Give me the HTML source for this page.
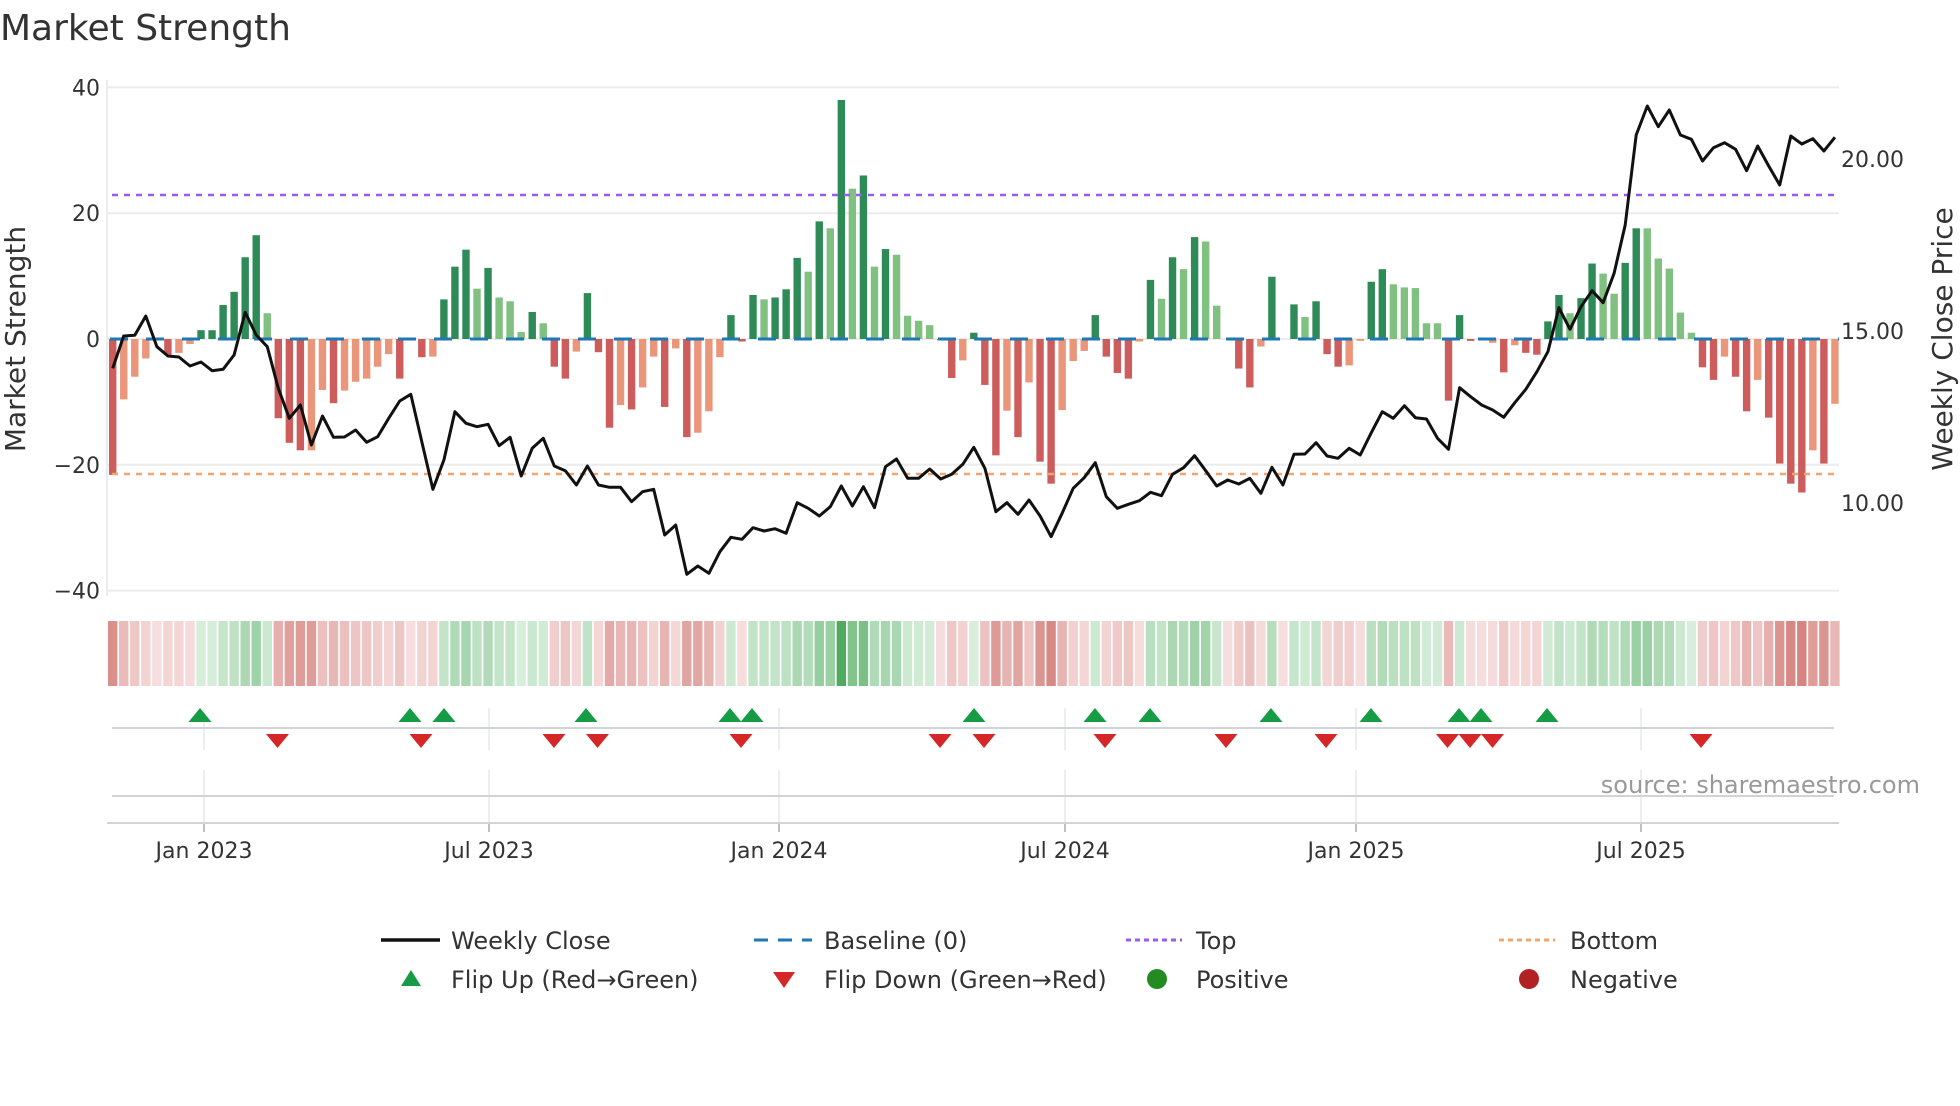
<!DOCTYPE html>
<html><head><meta charset="utf-8">
<style>
html,body{margin:0;padding:0;background:#fff;}
body{width:1960px;height:1102px;overflow:hidden;position:relative;font-family:"DejaVu Sans","Liberation Sans",sans-serif;}
svg text{font-family:"DejaVu Sans","Liberation Sans",sans-serif;}
</style></head>
<body>
<svg id="s" width="1960" height="1102" viewBox="0 0 1960 1102" xmlns="http://www.w3.org/2000/svg">
<text x="0" y="40" font-size="36" fill="#333">Market Strength</text>
<g id="grid"></g>
<g id="bars"></g>
<g id="strip"></g>
<g id="flip"></g>
<g id="labels" fill="#333" font-size="22"></g>
<text x="1920" y="793" font-size="24" fill="#999" text-anchor="end">source: sharemaestro.com</text>
<text transform="translate(25,339) rotate(-90)" font-size="28" fill="#333" text-anchor="middle">Market Strength</text>
<text transform="translate(1952,339) rotate(-90)" font-size="28" fill="#333" text-anchor="middle">Weekly Close Price</text>
<!-- legend -->
<g font-size="24" fill="#333">
<line x1="381" y1="940" x2="440" y2="940" stroke="#111" stroke-width="3.5"/>
<text x="451" y="949">Weekly Close</text>
<line x1="754" y1="940" x2="812" y2="940" stroke="#1f77b4" stroke-width="3" stroke-dasharray="14,10"/>
<text x="824" y="949">Baseline (0)</text>
<line x1="1126" y1="940" x2="1182" y2="940" stroke="#9b5de5" stroke-width="3" stroke-dasharray="5,4"/>
<text x="1196" y="949">Top</text>
<line x1="1499" y1="940" x2="1555" y2="940" stroke="#f0a470" stroke-width="3" stroke-dasharray="5,4"/>
<text x="1570" y="949">Bottom</text>
<polygon points="401,986 421,986 411,970" fill="#169c45"/>
<text x="451" y="988">Flip Up (Red→Green)</text>
<polygon points="773,972 795,972 784,988" fill="#d62728"/>
<text x="824" y="988">Flip Down (Green→Red)</text>
<circle cx="1157" cy="979" r="10" fill="#228b22"/>
<text x="1196" y="988">Positive</text>
<circle cx="1529" cy="979" r="10" fill="#b22222"/>
<text x="1570" y="988">Negative</text>
</g>
</svg>
<script>
var NS="http://www.w3.org/2000/svg";
function el(p,t,a){var e=document.createElementNS(NS,t);for(var k in a)e.setAttribute(k,a[k]);p.appendChild(e);return e;}
var V=[[-21.6,1],[-9.6,0],[-6,0],[-3.1,0],[0,1],[-2.5,1],[-2.2,0],[-0.8,0],[1.4,1],[1.4,1],
[5.4,1],[7.5,1],[13,1],[16.5,1],[4.1,0],[-12.6,1],[-16.5,1],[-17.7,1],[-17.7,0],[-8.1,0],
[-10.2,1],[-8.2,0],[-6.8,0],[-6.3,0],[-4.4,0],[-2.4,0],[-6.3,1],[0,1],[-2.9,1],[-2.8,0],
[6.3,1],[11.5,1],[14.2,1],[8,0],[11.3,1],[6.6,0],[6,0],[1.1,0],[4.3,1],[2.5,0],
[-4.4,1],[-6.3,1],[-2,0],[7.3,1],[-2.1,1],[-14.1,1],[-10.5,0],[-11.2,1],[-7.7,0],[-2.8,0],
[-10.8,1],[-1.5,0],[-15.6,1],[-14.9,0],[-11.5,0],[-2.9,0],[3.8,1],[-0.4,1],[7,1],[6.3,0],
[6.6,1],[7.9,1],[12.9,1],[10.7,0],[18.7,1],[17.6,0],[38,1],[23.9,0],[26,1],[11.5,0],
[14.3,1],[13.4,0],[3.7,0],[2.9,0],[2.2,0],[-0.2,1],[-6.2,1],[-3.4,0],[1,1],[-7.3,1],
[-18.5,1],[-11.4,0],[-15.6,1],[-6.9,0],[-19.5,1],[-23,1],[-11.3,0],[-3.5,0],[-1.9,0],[3.8,1],
[-2.8,1],[-5.4,1],[-6.3,1],[-0.4,0],[9.4,1],[6.4,0],[13,1],[11.1,0],[16.2,1],[15.5,0],
[5.3,0],[0,1],[-4.7,1],[-7.7,1],[-1.2,0],[9.9,1],[0,1],[5.5,1],[3.5,0],[6,1],
[-2.4,1],[-4.4,1],[-4.2,0],[-0.3,0],[9.1,1],[11.1,1],[8.7,0],[8.2,0],[8.1,0],[2.5,0],
[2.5,0],[-9.8,1],[3.8,1],[-0.3,1],[0,1],[-0.6,0],[-5.3,1],[-1,0],[-2.2,1],[-2.5,1],
[2.8,1],[7,1],[4.1,0],[6.5,1],[12,1],[10.4,0],[7.2,0],[12.1,1],[17.6,1],[17.6,0],
[12.8,0],[11.2,0],[4.2,0],[1,0],[-4.5,1],[-6.5,1],[-2.8,0],[-6,1],[-11.5,1],[-6.5,0],
[-12.5,1],[-19.8,1],[-23,1],[-24.4,1],[-17.7,0],[-19.8,1],[-10.3,0]];
var L=[865,768,766,708,800,828,831,858,846,872,868,825,697,765,800,925,1015,975,1095,1008,
1072,1071,1050,1087,1070,1015,963,943,1085,1228,1140,995,1030,1040,1033,1097,1072,1188,1105,1075,
1158,1172,1215,1158,1215,1222,1222,1265,1235,1228,1365,1335,1483,1458,1480,1415,1372,1378,1343,1353,
1346,1360,1268,1285,1308,1280,1218,1278,1220,1283,1160,1137,1195,1195,1167,1197,1183,1153,1102,1165,
1295,1268,1303,1260,1308,1370,1300,1225,1193,1148,1250,1285,1273,1262,1237,1247,1183,1163,1127,1172,
1218,1200,1212,1195,1240,1162,1215,1123,1122,1088,1128,1135,1105,1125,1058,995,1015,977,1013,1017,
1075,1108,923,950,975,990,1012,968,928,875,815,683,748,680,632,668,580,435,165,78,
140,90,165,178,243,203,188,208,272,198,258,315,168,192,176,213,172];
var X0=112.7,DX=11.04,Y0=339,SC=6.29;
function cx(i){return X0+DX*i;}
var g=document.getElementById('grid');
[40,20,0,-20,-40].forEach(function(v){var y=Y0-v*SC;
 el(g,'line',{x1:107,x2:1839,y1:y,y2:y,stroke:'#ececec','stroke-width':2});});
el(g,'line',{x1:107,x2:107,y1:80,y2:596,stroke:'#ececec','stroke-width':2});
var lab=document.getElementById('labels');
[[40,'40'],[20,'20'],[0,'0'],[-20,'\u221220'],[-40,'\u221240']].forEach(function(a){
 var t=el(lab,'text',{x:100,y:Y0-a[0]*SC+8,'text-anchor':'end'});t.textContent=a[1];});
[['20.00',159],['15.00',331],['10.00',503]].forEach(function(a){
 var t=el(lab,'text',{x:1841,y:a[1]+8});t.textContent=a[0];});
var b=document.getElementById('bars');
V.forEach(function(d,i){var v=d[0];if(v===0)return;var h=Math.abs(v)*SC;
 var c=v>0?(d[1]?'#2e8b57':'#80c080'):(d[1]?'#cd5c5c':'#e9967a');
 el(b,'rect',{x:cx(i)-3.7,y:v>0?Y0-h:Y0,width:7.4,height:h,fill:c});});
el(b,'line',{x1:110,x2:1839,y1:Y0,y2:Y0,stroke:'#1f77b4','stroke-width':3,'stroke-dasharray':'18,18'});
el(b,'line',{x1:112,x2:1839,y1:195,y2:195,stroke:'#9b5de5','stroke-width':2.5,'stroke-dasharray':'6,6'});
el(b,'line',{x1:112,x2:1839,y1:474,y2:474,stroke:'#f0a470','stroke-width':2.5,'stroke-dasharray':'6,6'});
var pts=L.map(function(y,i){return cx(i).toFixed(1)+','+(80+y/3).toFixed(1);}).join(' ');
el(b,'polyline',{points:pts,fill:'none',stroke:'#111','stroke-width':3,'stroke-linejoin':'round'});
var s=document.getElementById('strip');
function mix(a,b,t){return 'rgb('+a.map(function(x,k){return Math.round(x+(b[k]-x)*t);}).join(',')+')';}
V.forEach(function(d,i){var v=d[0],c;
 if(v>0)c=mix([218,240,222],[80,170,95],Math.min(1,v/38));
 else c=mix([246,222,222],[212,130,125],Math.min(1,-v/25));
 el(s,'rect',{x:cx(i)-4.7,y:621,width:9.4,height:65,fill:c});});
var f=document.getElementById('flip');
var ticks=[[204,'Jan 2023'],[489,'Jul 2023'],[779,'Jan 2024'],[1065,'Jul 2024'],[1356,'Jan 2025'],[1641,'Jul 2025']];
ticks.forEach(function(t){
 el(f,'line',{x1:t[0],x2:t[0],y1:708,y2:750,stroke:'#e6e9ee','stroke-width':1.5});
 el(f,'line',{x1:t[0],x2:t[0],y1:770,y2:823,stroke:'#e6e9ee','stroke-width':1.5});
 el(f,'line',{x1:t[0],x2:t[0],y1:823,y2:832,stroke:'#aaa','stroke-width':1.5});
 var tx=el(lab,'text',{x:t[0],y:858,'text-anchor':'middle'});tx.textContent=t[1];});
el(f,'line',{x1:112,x2:1834,y1:728,y2:728,stroke:'#d0d3d8','stroke-width':2});
el(f,'line',{x1:112,x2:1834,y1:796,y2:796,stroke:'#d0d3d8','stroke-width':2});
el(f,'line',{x1:107,x2:1839,y1:823,y2:823,stroke:'#d0d3d8','stroke-width':2});
[200,410,444,586,730,752,974,1095,1150,1271,1371,1459,1481,1547].forEach(function(x){
 el(f,'polygon',{points:(x-11.5)+',722 '+(x+11.5)+',722 '+x+',708',fill:'#169c45'});});
[277.5,421,554,597.5,741,940,984,1105,1226,1326,1447.5,1470,1492.5,1701].forEach(function(x){
 el(f,'polygon',{points:(x-11.5)+',734 '+(x+11.5)+',734 '+x+',748',fill:'#d62728'});});
</script>
</body></html>
